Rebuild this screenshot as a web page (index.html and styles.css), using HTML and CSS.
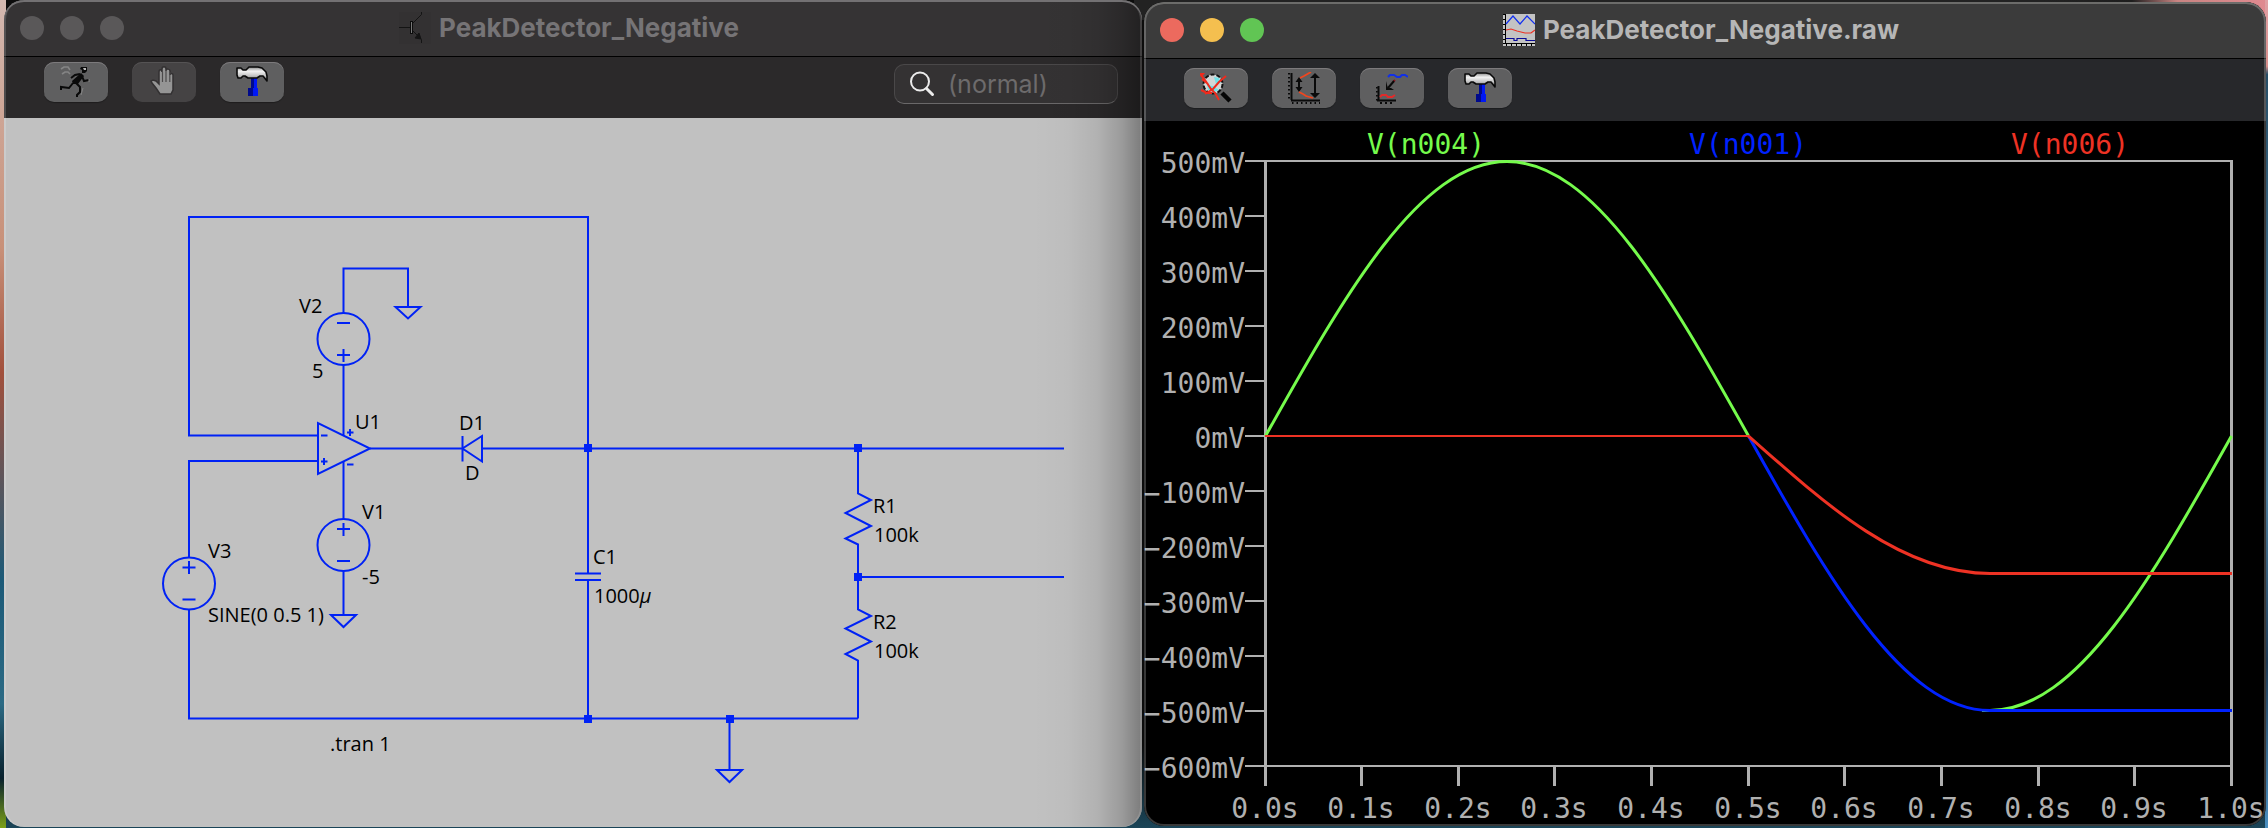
FILE: index.html
```html
<!DOCTYPE html>
<html lang="en">
<head>
<meta charset="utf-8">
<meta name="viewport" content="width=device-width, initial-scale=1">
<title>PeakDetector_Negative</title>
<link rel="stylesheet" href="styles.css">
</head>
<body class="desktop">

<svg class="defs" aria-hidden="true">
  <defs>
    <linearGradient id="steel" x1="0" y1="0" x2="0" y2="1">
      <stop offset="0" stop-color="#8a8a8a"/><stop offset=".3" stop-color="#f2f2f2"/>
      <stop offset=".6" stop-color="#c8c8c8"/><stop offset="1" stop-color="#6c6c6c"/>
    </linearGradient>
    <symbol id="hammer" viewBox="0 0 32 32">
      <path d="M16 11h5v11h1v8H12v-8h3z" fill="#0018f5"/>
      <path d="M15 11h3v11h-1v8h-5v-8h3z" fill="#000a8c"/>
      <path d="M1 2h4l2 2h3l3-3h9l4 1 4 4 1 4v5l-4-5h-3l-3 2H12l-3-2H7l-2 2H2L1 9z" fill="url(#steel)" stroke="#0a0a0a" stroke-width="1.6" stroke-linejoin="round"/>
    </symbol>
  </defs>
</svg>

<section class="window window-schematic" aria-label="PeakDetector_Negative">
  <header class="titlebar">
    <div class="lights">
      <button class="light" aria-label="Close"></button>
      <button class="light" aria-label="Minimize"></button>
      <button class="light" aria-label="Zoom"></button>
    </div>
    <h1 class="title">
      <svg class="title-icon" viewBox="0 0 32 32" fill="none" stroke="#141414" aria-hidden="true">
        <rect width="32" height="32" fill="#333132" stroke="none"/>
        <path d="M0 15.500h11M14 11l8.500-8.500V0M14 19l8.500 8.500V31"/>
        <rect x="11.500" y="9.500" width="2" height="12" stroke="#0c0c0c" fill="#777"/>
        <path d="M22 27l-6-1 4-5z" fill="#141414"/>
      </svg>
      PeakDetector_Negative
    </h1>
  </header>
  <div class="toolbar">
    <button class="tool" aria-label="Run">
      <svg viewBox="0 0 32 32" fill="none" aria-hidden="true">
        <path d="M1 3l3-2h4l2 3M2 8l3-2h3l2 2" stroke="#858585" stroke-width="1.600"/>
        <path d="M21 1h6v4l-2 2h-3v-3l-2-1z" fill="#0a0a0a"/>
        <path d="M23 2h3v2h-2z" fill="#bbb"/>
        <path d="M21 7l3 3-6 8-5 0-1-3z" fill="#0a0a0a"/>
        <path d="M20 8l-5 1-4 3M22 10l2 5 5-1M13 17l-4 5-8-1v3M16 17l4 4v5l-3 3v2" stroke="#0a0a0a" stroke-width="2"/>
        <path d="M23 22l-2 7M29 13v3" stroke="#858585"/>
      </svg>
    </button>
    <button class="tool tool-off" aria-label="Halt" disabled>
      <svg viewBox="0 0 32 32" aria-hidden="true">
        <path d="M12 28l-4-6-4-5-1-2 2-1 3 1 3 3V6c0-3 3-3 3 0V3c0-3 4-3 4 0v2c0-3 4-2 4 0v4c0-2 3-2 3 0v15l-2 4z" fill="#959595" stroke="#333132" stroke-width="1.500"/>
        <path d="M14.500 6v10M18 4v12M21.800 6v10" stroke="#4c4a4b" stroke-width="1.200"/>
      </svg>
    </button>
    <button class="tool" aria-label="Settings"><svg aria-hidden="true"><use href="#hammer"/></svg></button>
    <label class="search">
      <svg class="search-icon" viewBox="0 0 26 26" fill="none" stroke="#ececec" aria-hidden="true">
        <circle cx="11" cy="10.500" r="9" stroke-width="2"/><path d="M17.500 17.500l6 6" stroke-width="3" stroke-linecap="round"/>
      </svg>
      <input class="search-input" type="text" placeholder="(normal)" aria-label="Simulation mode">
    </label>
  </div>
  <svg class="schematic" viewBox="4 118 1138 709" role="img" aria-label="Circuit schematic">
    <g class="wire">
      <path d="M318 435.500H189V217H588V570M318 461H189V557M189 609V718.500H858"/>
      <path d="M343.500 313V268.500H408V307M343.500 365V435.500M343.500 461V519M343.500 571V615"/>
      <path d="M370 448.500H462.500M482 448.500H1064M588 448V573.500M588 580V718.500M858 577H1064"/>
      <path d="M575 573.500h26M575 580h26M729.500 718.500V770"/>
      <path d="M395.500 307h25L408 318.500zM331 615h25l-12.500 12zM717 770h25l-12.500 12z"/>
      <path d="M318 423v51l52-25.500zM462.500 436v25.500M482 436v25.500L462.500 448.500z"/>
      <path d="M858 448.500V493.500l13 6.500-25.500 13 25.500 13-25.500 12.500 12.500 6V609.500l13 6.500-25.500 12.500 25.500 13-25.500 12.500 12.500 6.500V718.500"/>
      <circle cx="343.500" cy="339" r="26"/><circle cx="343.500" cy="545" r="26"/><circle cx="189" cy="583.500" r="26"/>
      <path d="M337 323h13M337 355h13M343.500 349v13M337 529h13M343.500 523v13M337 561h13M182.500 567.500h13M189 561v13M182.500 599.500h13"/>
      <path d="M321 435.500h6.500M321 461.500h6.500M324 458v7M347 432.500h6.500M350 429v7M347 464.500h6.500"/>
    </g>
    <path class="node" d="M584 444h8v8h-8zM854 444h8v8h-8zM854 573h8v8h-8zM584 715h8v8h-8zM726 715h8v8h-8z"/>
    <g class="part-label">
      <text x="299" y="313">V2</text><text x="312" y="378">5</text>
      <text x="355" y="429">U1</text><text x="459" y="430">D1</text><text x="465" y="480">D</text>
      <text x="362" y="519">V1</text><text x="362" y="584">-5</text>
      <text x="208" y="558">V3</text><text x="208" y="622">SINE(0 0.5 1)</text>
      <text x="593" y="564">C1</text><text x="594" y="603">1000<tspan font-style="italic">µ</tspan></text>
      <text x="873" y="513">R1</text><text x="874" y="542">100k</text>
      <text x="873" y="629">R2</text><text x="874" y="658">100k</text>
      <text x="330" y="751">.tran 1</text>
    </g>
  </svg>
</section>

<section class="window window-plot" aria-label="PeakDetector_Negative.raw">
  <header class="titlebar">
    <div class="lights">
      <button class="light light-close" aria-label="Close"></button>
      <button class="light light-min" aria-label="Minimize"></button>
      <button class="light light-zoom" aria-label="Zoom"></button>
    </div>
    <h2 class="title">
      <svg class="title-icon" viewBox="0 0 32 32" fill="none" aria-hidden="true">
        <rect width="32" height="32" fill="#c3c3c3"/>
        <path d="M2.500 0v30M0 29.500h32" stroke="#000"/>
        <path d="M1 0v30" stroke="#000" stroke-width="2" stroke-dasharray="1 4"/>
        <path d="M3 31h29" stroke="#000" stroke-width="2" stroke-dasharray="1 4"/>
        <path d="M3 10l7-8 7 8 7-8 8 8" stroke="#1230f0" stroke-width="1.200"/>
        <path d="M3 16l5-1 6 2 8 2 6 0 4-3" stroke="#ee3224" stroke-width="1.200"/>
        <path d="M3 24.500h8v2h3v-2h9v2h9" stroke="#0a0a96" stroke-width="1.200"/>
      </svg>
      PeakDetector_Negative.raw
    </h2>
  </header>
  <div class="toolbar">
    <button class="tool" aria-label="Zoom to fit">
      <svg viewBox="0 0 32 32" fill="none" aria-hidden="true">
        <circle cx="13" cy="12" r="9.500" fill="#d2d6d6" stroke="#111" stroke-width="2" stroke-dasharray="4 2"/>
        <path d="M14 5l5 1 2 5-5 1zM7 13l6 1 6 4-5 2-6-2z" fill="#6fe3ea"/>
        <path d="M22 21l2 2M24 23l6 6" stroke="#050505" stroke-width="4.500"/>
        <path d="M0 2l5 6 6 9 4 4 4 7M26 4l-7 6-6 7-8 5M1 18l6 3 5 0M2 7l6 5" stroke="#f02a1c" stroke-width="2"/>
        <path d="M0 1h5l-3 4z" fill="#f02a1c"/>
      </svg>
    </button>
    <button class="tool" aria-label="Autorange Y axis">
      <svg viewBox="0 0 32 32" fill="none" aria-hidden="true">
        <path d="M3.500 1v27M3 28.500h29" stroke="#0a0a0a" stroke-width="2"/>
        <path d="M1 1v27" stroke="#0a0a0a" stroke-width="2" stroke-dasharray="1.500 2.500"/>
        <path d="M4 31h28" stroke="#0a0a0a" stroke-width="2" stroke-dasharray="1.500 3"/>
        <path d="M11 8v10M27 3v20" stroke="#0a0a0a" stroke-width="2"/>
        <path d="M7.500 10l3.500-5 3.500 5zM7.500 15l3.500 5 3.500-5zM22 6l5-5 5 5zM22 21l5 5 5-5z" fill="#0a0a0a"/>
        <path d="M12 6l4-2 7-4M11 20l4 2 3 2 7 2" stroke="#f0461e" stroke-width="1.800"/>
      </svg>
    </button>
    <button class="tool" aria-label="Add trace">
      <svg viewBox="0 0 32 32" fill="none" aria-hidden="true">
        <path d="M12 5l2-2h4l3 2h3l2-2h3l3 2" stroke="#1230e6" stroke-width="2"/>
        <path d="M19 8l-2 2" stroke="#8a1420" stroke-width="2"/>
        <path d="M18 9l-6 7" stroke="#0a0a0a" stroke-width="2"/>
        <path d="M10 9v9h8l-3-2-3 0-1-3z" fill="#0a0a0a"/>
        <path d="M2.500 14v15M1 28.500h19" stroke="#0a0a0a" stroke-width="2"/>
        <path d="M.8 15v14" stroke="#0a0a0a" stroke-width="2" stroke-dasharray="1.500 2.500"/>
        <path d="M4 31h14" stroke="#0a0a0a" stroke-width="2" stroke-dasharray="2 3"/>
        <path d="M4 25l2-2h4l2 2h4l3-2" stroke="#e22a2a" stroke-width="2"/>
      </svg>
    </button>
    <button class="tool" aria-label="Settings"><svg aria-hidden="true"><use href="#hammer"/></svg></button>
  </div>
  <svg class="plot" viewBox="1144 121 1122 705" role="img" aria-label="Transient waveforms">
    <g class="legend">
      <text class="n004" x="1426" y="154">V(n004)</text>
      <text class="n001" x="1748" y="154">V(n001)</text>
      <text class="n006" x="2070" y="154">V(n006)</text>
    </g>
    <path class="grid-line" d="M1245 161H2232M1245 216h20M1245 271h20M1245 326h20M1245 381h20M1245 436h20M1245 491h20M1245 546h20M1245 601h20M1245 656h20M1245 711h20M1245 766H2232"/>
    <path class="grid-line grid-thick" d="M1265.500 160V786M2231.500 160V786M1361.500 766v20M1458.500 766v20M1554.500 766v20M1651.500 766v20M1748.500 766v20M1844.500 766v20M1941.500 766v20M2038.500 766v20M2134.500 766v20"/>
    <g class="y-label">
      <text x="1245" y="173">500mV</text><text x="1245" y="228">400mV</text>
      <text x="1245" y="283">300mV</text><text x="1245" y="338">200mV</text>
      <text x="1245" y="393">100mV</text><text x="1245" y="448">0mV</text>
      <text x="1245" y="503">−100mV</text><text x="1245" y="558">−200mV</text>
      <text x="1245" y="613">−300mV</text><text x="1245" y="668">−400mV</text>
      <text x="1245" y="723">−500mV</text><text x="1245" y="778">−600mV</text>
    </g>
    <g class="x-label">
      <text x="1265" y="818">0.0s</text><text x="1361" y="818">0.1s</text><text x="1458" y="818">0.2s</text>
      <text x="1554" y="818">0.3s</text><text x="1651" y="818">0.4s</text><text x="1748" y="818">0.5s</text>
      <text x="1844" y="818">0.6s</text><text x="1941" y="818">0.7s</text><text x="2038" y="818">0.8s</text>
      <text x="2134" y="818">0.9s</text><text x="2231" y="818">1.0s</text>
    </g>
    <path class="trace trace-n004" d="M1265.500 436C1344.300 295.400 1419.600 161.500 1507 161.500S1669.700 295.400 1748.500 436M1982 710.500H1990C2077.400 710.500 2152.700 576.600 2231.500 436"/>
    <path class="trace trace-n001" d="M1748.500 436C1827.300 576.600 1902.600 710.500 1990 710.500H2232"/>
    <path class="trace trace-n006" d="M1748.500 436C1827.300 506.300 1902.600 573.500 1990 573.500H2232"/>
    <path class="trace trace-n006 trace-flat" d="M1265 436H1749"/>
  </svg>
</section>

</body>
</html>
```
FILE: styles.css
```css
* { box-sizing: border-box; }

.desktop {
  margin: 0;
  min-height: 100vh;
  padding: 0 2px 0 4px;
  display: grid;
  grid-template-columns: minmax(0, 1138fr) minmax(0, 1122fr);
  column-gap: 2px;
  align-items: start;
  background:
    linear-gradient(#e0a0a4, #d98f8c 8%, #274f68 9%, #4a7b9c 60%, #1d3a55 80%, #4a8fc0) right / 3px 100% no-repeat,
    linear-gradient(#d3b8b0, #c89078 30%, #a2503c 45%, #1c5a78 70%, #2c6a84 85%, #08202c 94%, #7ca018) left / 6px 100% no-repeat,
    linear-gradient(90deg, #222 80%, #1e1e1e 88%, #c98482 92%, #e08a90) right top / 50% 20px no-repeat,
    linear-gradient(#0c0c0c 90%, #1b4558);
  font-family: Inter, "Liberation Sans", sans-serif;
}

.defs { position: absolute; width: 0; height: 0; }

.window {
  position: relative;
  overflow: hidden;
  border-radius: 20px;
}

.window::after {
  content: "";
  position: absolute;
  inset: 0;
  border-radius: 20px;
  pointer-events: none;
}

.window-schematic { background: #c1c1c1; }
.window-schematic::after {
  background: linear-gradient(to left, rgba(0, 0, 0, .36), rgba(0, 0, 0, .2) 20px, rgba(0, 0, 0, .08) 45px, rgba(0, 0, 0, .02) 75px, transparent 110px);
  box-shadow: inset 0 2px 0 #737173, inset 2px 0 0 rgba(255, 255, 255, .16), inset -2px 0 0 rgba(255, 255, 255, .14);
}

.window-plot { margin-top: 2px; background: #000; }
.window-plot::after {
  box-shadow: inset 0 2px 0 #6c6c6a, inset 0 0 0 2px rgba(255, 255, 255, .22);
}

.titlebar {
  display: grid;
  grid-template-columns: 1fr auto 1fr;
  align-items: center;
  height: 57px;
  padding: 0 24px 0 16px;
  border-bottom: 1px solid #000;
}
.window-schematic .titlebar { background: #353334; color: #767476; }
.window-plot .titlebar { background: #3b3b3b; color: #b6b6b6; }

.lights { display: flex; gap: 16px; }
.light {
  width: 24px;
  height: 24px;
  padding: 0;
  border: 0;
  border-radius: 50%;
  background: #5a5859;
}
.light-close { background: #ec6a5e; }
.light-min { background: #f4bf4f; }
.light-zoom { background: #61c554; }

.title {
  display: flex;
  align-items: center;
  gap: 8px;
  margin: 0;
  font-size: 26px;
  font-weight: 700;
  line-height: 32px;
  white-space: nowrap;
}
.title-icon { width: 32px; height: 32px; }

.toolbar {
  display: flex;
  align-items: flex-start;
  gap: 24px;
  padding: 5px 24px 14px 40px;
}
.window-schematic .toolbar { height: 61px; background: #2b292a; }
.window-plot .toolbar { height: 62px; padding-top: 9px; background: #27282b; }

.tool {
  display: flex;
  justify-content: center;
  flex: none;
  width: 64px;
  height: 40px;
  padding: 4px 0 0;
  border: 0;
  border-radius: 10px;
  background: #5f5f60;
  box-shadow: inset 0 1px 0 #7c7a7c, 0 1px 1px rgba(0, 0, 0, .3);
}
.tool svg { width: 32px; height: 32px; }
.tool-off { background: #454344; box-shadow: inset 0 1px 0 #555354; }

.search {
  display: flex;
  align-items: center;
  gap: 13px;
  width: 224px;
  height: 40px;
  margin: 2px 0 0 auto;
  padding: 0 14px;
  border: 1px solid #4a4849;
  border-bottom-color: #6a6869;
  border-radius: 10px;
  background: #343233;
}
.search-icon { flex: none; width: 26px; height: 26px; }
.search-input {
  min-width: 0;
  width: 100%;
  padding: 0;
  border: 0;
  outline: 0;
  background: none;
  color: #d0d0d0;
  font: 25px/36px Inter, "Liberation Sans", sans-serif;
}
.search-input::placeholder { color: #6d6b6c; opacity: 1; }

.schematic, .plot { display: block; width: 100%; height: auto; }

.wire { fill: none; stroke: #0022f5; stroke-width: 2; }
.node { fill: #0022f5; }
.part-label { font: 20px "Open Sans", "Noto Sans", sans-serif; fill: #000; }

.legend, .y-label, .x-label { font: 28px "DejaVu Sans Mono", monospace; }
.legend, .x-label { text-anchor: middle; }
.y-label { text-anchor: end; }
.x-label, .y-label { fill: #b0b0b0; }
.n004 { fill: #75fb4c; }
.n001 { fill: #0022ff; }
.n006 { fill: #ee3224; }

.grid-line { fill: none; stroke: #b0b0b0; stroke-width: 2; }
.grid-thick { stroke-width: 3; }
.trace { fill: none; stroke-width: 3; }
.trace-n004 { stroke: #75fb4c; }
.trace-n001 { stroke: #0022ff; }
.trace-n006 { stroke: #ee3224; }
.trace-flat { stroke-width: 2; }
```
